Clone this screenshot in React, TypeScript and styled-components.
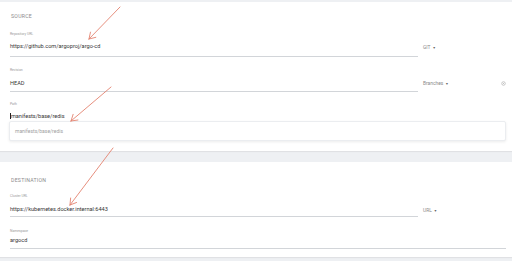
import styled, { createGlobalStyle } from "styled-components";

const GlobalStyle = createGlobalStyle`
  html, body {
    margin: 0;
    padding: 0;
    background: #eef0f3;
    font-family: Roboto, "Liberation Sans", sans-serif;
  }
`;

const Page = styled("div")`
  position: relative;
  width: 512px;
  height: 261px;
  overflow: hidden;
  display: flex;
  flex-direction: column;
  padding-top: 2px;
  box-sizing: border-box;
`;

const Card = styled("div")<{ $top: number; $bottom: number }>`
  background: #fff;
  padding: ${(p) => p.$top}px 6px ${(p) => p.$bottom}px 10px;
  box-shadow: 0 1px 1px rgba(0, 0, 0, 0.06);
  display: flex;
  flex-direction: column;
  flex-shrink: 0;
`;

const Gap = styled("div")`
  height: 11px;
  flex-shrink: 0;
`;

const Title = styled("div")<{ $after: number }>`
  font-size: 5.2px;
  line-height: 8px;
  letter-spacing: 0.25px;
  color: #8c8c8c;
  margin-left: 1px;
  margin-bottom: ${(p) => p.$after}px;
`;

const Row = styled("div")<{ $after: number }>`
  display: flex;
  align-items: flex-end;
  margin-bottom: ${(p) => p.$after}px;
`;

const Field = styled("div")<{ $pad: number }>`
  flex: 1;
  display: flex;
  flex-direction: column;
  padding-bottom: ${(p) => p.$pad}px;
  border-bottom: 1px solid #d2d5d9;
`;

const PlainField = styled("div")`
  flex: 1;
  display: flex;
  flex-direction: column;
`;

const Label = styled("div")<{ $gap: number }>`
  font-size: 3.4px;
  line-height: 5px;
  color: #9a9a9a;
  margin-bottom: ${(p) => p.$gap}px;
`;

const Value = styled("div")`
  font-size: 5.6px;
  line-height: 9px;
  color: #363636;
  display: flex;
  align-items: center;
`;

const Cursor = styled("span")`
  display: inline-block;
  width: 0.6px;
  height: 6px;
  background: #222;
  margin-right: 0.3px;
`;

const Side = styled("div")<{ $lift: number }>`
  width: 88px;
  flex-shrink: 0;
  box-sizing: border-box;
  padding-left: 5px;
  margin-bottom: ${(p) => p.$lift}px;
  display: flex;
  align-items: center;
  justify-content: space-between;
  font-size: 4.9px;
  line-height: 8px;
  color: #8a8a8a;
`;

const Caret = styled("span")`
  font-size: 3.4px;
  margin-left: 2px;
  color: #666;
`;

const Suggest = styled("div")`
  margin-left: -1px;
  margin-top: 0.5px;
  height: 18px;
  border: 1px solid #ebedf0;
  border-radius: 2px;
  box-shadow: 0 1px 3px rgba(0, 0, 0, 0.08);
  display: flex;
  align-items: center;
  padding-left: 5px;
  font-size: 5px;
  color: #a0a0a0;
  background: #fff;
`;

const Arrows = styled("svg")`
  position: absolute;
  left: 0;
  top: 0;
  pointer-events: none;
`;

type ArrowDef = { x1: number; y1: number; x2: number; y2: number };

const arrows: ArrowDef[] = [
  { x1: 120, y1: 7, x2: 89, y2: 39 },
  { x1: 111, y1: 87, x2: 71, y2: 121 },
  { x1: 113, y1: 148, x2: 70, y2: 205 },
];

const head = (a: ArrowDef, sign: number) => {
  const dx = a.x1 - a.x2;
  const dy = a.y1 - a.y2;
  const len = Math.hypot(dx, dy);
  const ux = dx / len;
  const uy = dy / len;
  const ang = (sign * 32 * Math.PI) / 180;
  const rx = ux * Math.cos(ang) - uy * Math.sin(ang);
  const ry = ux * Math.sin(ang) + uy * Math.cos(ang);
  return `${a.x2},${a.y2} ${a.x2 + rx * 7},${a.y2 + ry * 7}`;
};

const App = () => {
  return (
    <Page>
      <GlobalStyle />
      <Card $top={10} $bottom={10}>
        <Title $after={11.5}>SOURCE</Title>
        <Row $after={11}>
          <Field $pad={5}>
            <Label $gap={5}>Repository URL</Label>
            <Value>https://github.com/argoproj/argo-cd</Value>
          </Field>
          <Side $lift={4.5}>
            <span>
              GIT<Caret>▼</Caret>
            </span>
          </Side>
        </Row>
        <Row $after={10}>
          <Field $pad={3}>
            <Label $gap={6}>Revision</Label>
            <Value>HEAD</Value>
          </Field>
          <Side $lift={3.5}>
            <span>
              Branches<Caret>▼</Caret>
            </span>
            <svg width="5" height="5" viewBox="0 0 10 10">
              <circle cx="5" cy="5" r="3.6" fill="none" stroke="#aaa" strokeWidth="1.2" />
              <path d="M3.6 3.6 L6.4 6.4 M6.4 3.6 L3.6 6.4" stroke="#aaa" strokeWidth="1" />
            </svg>
          </Side>
        </Row>
        <PlainField>
          <Label $gap={5}>Path</Label>
          <Value>
            <Cursor />
            manifests/base/redis
          </Value>
          <Suggest>manifests/base/redis</Suggest>
        </PlainField>
      </Card>
      <Gap />
      <Card $top={14} $bottom={8}>
        <Title $after={9.5}>DESTINATION</Title>
        <Row $after={11.5}>
          <Field $pad={2.5}>
            <Label $gap={6}>Cluster URL</Label>
            <Value>https://kubernetes.docker.internal:6443</Value>
          </Field>
          <Side $lift={2}>
            <span>
              URL<Caret>▼</Caret>
            </span>
          </Side>
        </Row>
        <Field $pad={3.5}>
          <Label $gap={2}>Namespace</Label>
          <Value>argocd</Value>
        </Field>
      </Card>
      <Arrows width="512" height="261" viewBox="0 0 512 261">
        {arrows.map((a, i) => (
          <g key={i} stroke="#e3826f" strokeWidth="0.9" fill="none" strokeLinecap="round">
            <line x1={a.x1} y1={a.y1} x2={a.x2} y2={a.y2} />
            <polyline points={head(a, 1)} />
            <polyline points={head(a, -1)} />
          </g>
        ))}
      </Arrows>
    </Page>
  );
};

export default App;
